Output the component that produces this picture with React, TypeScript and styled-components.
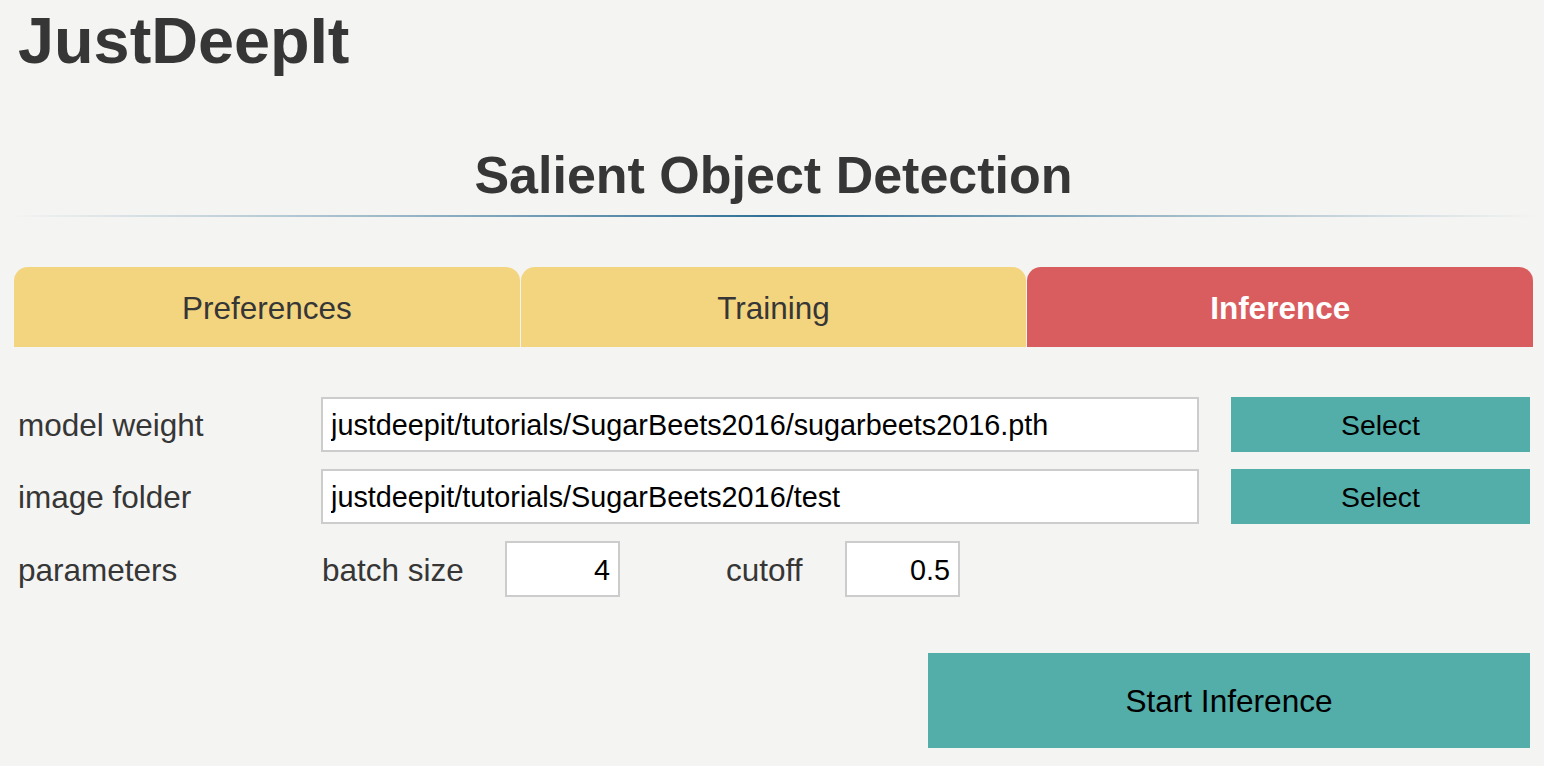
import React from "react";
import styled, { createGlobalStyle } from "styled-components";

const GlobalStyle = createGlobalStyle`
  html, body {
    margin: 0;
    padding: 0;
    background: #f4f4f2;
    font-family: "Liberation Sans", Arial, Helvetica, sans-serif;
  }
  * { box-sizing: border-box; }
`;

const Page = styled.div`
  width: 1544px;
  height: 766px;
  padding: 9px 11px 0 14px;
  overflow: hidden;
  background: #f4f4f2;
`;

const AppTitle = styled.h1`
  margin: 0 0 0 4px;
  font-size: 64.8px;
  line-height: 64px;
  font-weight: 700;
  color: #363636;
`;

const SectionTitle = styled.h2`
  margin: 76px 0 0;
  text-align: center;
  font-size: 52px;
  line-height: 52px;
  font-weight: 700;
  color: #363636;
`;

const Divider = styled.div`
  margin: 14px -4px 0;
  height: 2px;
  background: linear-gradient(
    to right,
    rgba(47, 111, 150, 0) 0%,
    rgba(47, 111, 150, 0.45) 25%,
    #2f6f96 50%,
    rgba(47, 111, 150, 0.45) 75%,
    rgba(47, 111, 150, 0) 100%
  );
`;

const TabBar = styled.div`
  margin-top: 50px;
  display: flex;
  gap: 1px;
`;

const Tab = styled.div<{ $active?: boolean }>`
  flex: 1;
  height: 80px;
  display: flex;
  align-items: center;
  justify-content: center;
  border-radius: 14px 14px 0 0;
  background: ${(p) => (p.$active ? "#d95c5f" : "#f3d47f")};
  color: ${(p) => (p.$active ? "#ffffff" : "#363636")};
  font-size: 31.5px;
  font-weight: ${(p) => (p.$active ? 700 : 400)};
  padding-top: 2px;
`;

const Form = styled.div`
  margin-top: 50px;
  padding: 0 3px 0 4px;
  display: grid;
  grid-template-columns: 303px 878px 1fr;
  row-gap: 17px;
  align-items: center;
`;

const Label = styled.div`
  height: 55px;
  display: flex;
  align-items: center;
  padding-top: 2px;
  font-size: 31.5px;
  color: #363636;
`;

const TextField = styled.input`
  width: 100%;
  height: 55px;
  border: 2px solid #cccccc;
  background: #ffffff;
  padding: 2px 8px 0;
  font-family: "Liberation Sans", Arial, sans-serif;
  font-size: 28.8px;
  color: #000000;
  outline: none;
`;

const TealButton = styled.button<{ $size: number }>`
  border: none;
  background: #53ada9;
  color: #000000;
  font-family: "Liberation Sans", Arial, sans-serif;
  font-size: ${(p) => p.$size}px;
  cursor: pointer;
  padding: 2px 0 0;
`;

const SelectButton = styled(TealButton)`
  justify-self: end;
  width: 299px;
  height: 55px;
`;

const ParamRow = styled.div`
  grid-column: 2 / 4;
  display: flex;
  align-items: center;
`;

const ParamLabel = styled.div<{ $width: number; $offset?: number }>`
  width: ${(p) => p.$width}px;
  margin-left: ${(p) => p.$offset ?? 0}px;
  padding-left: 1px;
  padding-top: 2px;
  font-size: 31.5px;
  color: #363636;
`;

const NumberField = styled.input`
  width: 115px;
  height: 56px;
  border: 2px solid #cccccc;
  background: #ffffff;
  padding: 2px 8px 0;
  text-align: right;
  font-family: "Liberation Sans", Arial, sans-serif;
  font-size: 28.8px;
  color: #000000;
  outline: none;
`;

const Actions = styled.div`
  margin-top: 56px;
  padding-right: 3px;
  display: flex;
  justify-content: flex-end;
`;

const StartButton = styled(TealButton)`
  width: 602px;
  height: 95px;
`;

export default function App() {
  return (
    <>
      <GlobalStyle />
      <Page>
        <AppTitle>JustDeepIt</AppTitle>
        <SectionTitle>Salient Object Detection</SectionTitle>
        <Divider />
        <TabBar>
          <Tab>Preferences</Tab>
          <Tab>Training</Tab>
          <Tab $active>Inference</Tab>
        </TabBar>
        <Form>
          <Label>model weight</Label>
          <TextField
            readOnly
            value="justdeepit/tutorials/SugarBeets2016/sugarbeets2016.pth"
          />
          <SelectButton $size={28.4}>Select</SelectButton>

          <Label>image folder</Label>
          <TextField readOnly value="justdeepit/tutorials/SugarBeets2016/test" />
          <SelectButton $size={28.4}>Select</SelectButton>

          <Label>parameters</Label>
          <ParamRow>
            <ParamLabel $width={184}>batch size</ParamLabel>
            <NumberField readOnly value="4" />
            <ParamLabel $width={120} $offset={105}>
              cutoff
            </ParamLabel>
            <NumberField readOnly value="0.5" />
          </ParamRow>
        </Form>
        <Actions>
          <StartButton $size={31.6}>Start Inference</StartButton>
        </Actions>
      </Page>
    </>
  );
}
